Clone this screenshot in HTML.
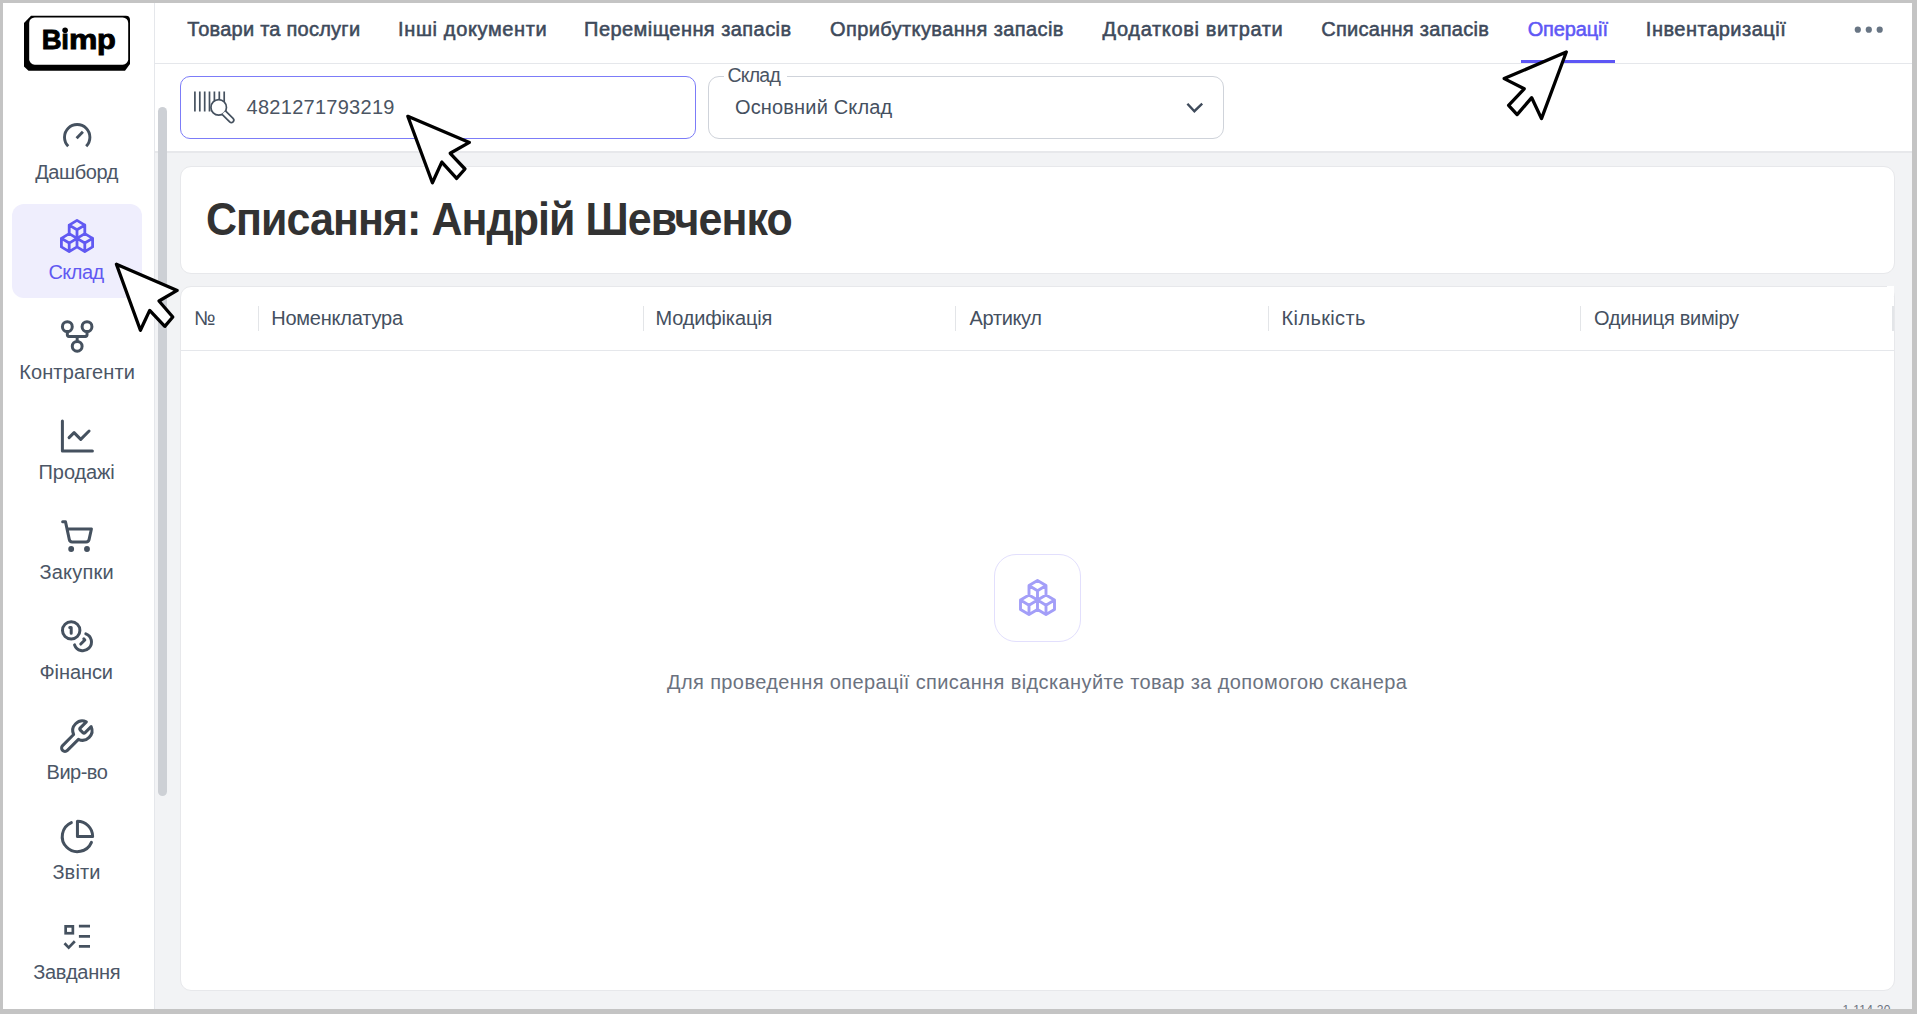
<!DOCTYPE html>
<html><head><meta charset="utf-8">
<style>
html,body{margin:0;padding:0;}
body{width:1917px;height:1014px;background:#c4c4c4;position:relative;overflow:hidden;font-family:"Liberation Sans",sans-serif;}
.abs{position:absolute;}
.t{position:absolute;line-height:1;white-space:nowrap;font-family:"Liberation Sans",sans-serif;}
#app{position:absolute;left:3px;top:3px;width:1909px;height:1006px;background:#f2f3f5;overflow:hidden;}
#side{position:absolute;left:3px;top:3px;width:151px;height:1006px;background:#fff;border-right:1px solid #e5e7eb;}
#hdr{position:absolute;left:155px;top:3px;width:1757px;height:60px;background:#fff;border-bottom:1px solid #e5e7eb;}
#srow{position:absolute;left:155px;top:64px;width:1757px;height:87px;background:#fff;border-bottom:2px solid #e7e8eb;}
.card{position:absolute;background:#fff;border:1px solid #e7e8eb;border-radius:11px;box-sizing:border-box;}
.tab{font-size:20px;color:#3e4a5b;-webkit-text-stroke:0.55px #3e4a5b;}
.th{font-size:20px;color:#45505f;}
.nl{font-size:20px;color:#4b5666;}
</style></head>
<body>
<div id="app"></div>
<div id="side"></div>
<div id="hdr"></div>
<div id="srow"></div>

<!-- logo -->
<svg class="abs" style="left:0;top:0" width="160" height="90" viewBox="0 0 160 90">
  <path d="M31 15.7 H126 Q130 15.7 130 20 V64 L125 70.8 H28.5 L24 66.5 V23 Z" fill="#000"/>
  <rect x="29.2" y="17.4" width="99" height="47.3" rx="5.5" fill="#fff"/>
</svg>
<div class="t" id="lgB" style="left:41.8px;top:26px;font-size:27.5px;font-weight:700;color:#000;-webkit-text-stroke:0.9px #000;">B</div>
<div class="t" id="lgI" style="left:61.3px;top:26px;font-size:27.5px;font-weight:700;color:#000;-webkit-text-stroke:0.9px #000;">ı</div>
<div class="t" id="lgM" style="left:68.8px;top:26px;font-size:27.5px;font-weight:700;color:#000;-webkit-text-stroke:0.9px #000;transform:scaleX(1.16);transform-origin:0 0;">m</div>
<div class="t" id="lgP" style="left:96.8px;top:26px;font-size:27.5px;font-weight:700;color:#000;-webkit-text-stroke:0.9px #000;transform:scaleX(1.12);transform-origin:0 0;">p</div>
<svg class="abs" style="left:0;top:0" width="100" height="60"><circle cx="65.1" cy="30.2" r="2.8" fill="#000"/></svg>

<!-- sidebar active -->
<div class="abs" style="left:12px;top:204px;width:130px;height:94px;background:#efeefd;border-radius:12px;"></div>

<!-- tabs -->
<div class="t tab" id="tab1" style="left:187.3px;top:19px;letter-spacing:0.244px;">Товари та послуги</div>
<div class="t tab" id="tab2" style="left:398.0px;top:19px;letter-spacing:0.639px;">Інші документи</div>
<div class="t tab" id="tab3" style="left:584.1px;top:19px;letter-spacing:0.440px;">Переміщення запасів</div>
<div class="t tab" id="tab4" style="left:830.0px;top:19px;letter-spacing:0.391px;">Оприбуткування запасів</div>
<div class="t tab" id="tab5" style="left:1102.6px;top:19px;letter-spacing:0.649px;">Додаткові витрати</div>
<div class="t tab" id="tab6" style="left:1321.2px;top:19px;letter-spacing:0.287px;">Списання запасів</div>
<div class="t tab" id="tab7" style="left:1527.7px;top:19px;color:#5f58f5;-webkit-text-stroke-color:#5f58f5;letter-spacing:-0.129px;">Операції</div>
<div class="t tab" id="tab8" style="left:1645.8px;top:19px;letter-spacing:0.523px;">Інвентаризації</div>
<div class="abs" style="left:1521px;top:60px;width:94px;height:3px;background:#5d56f5;"></div>
<svg class="abs" style="left:1840px;top:15px" width="60" height="30">
  <circle cx="17.8" cy="14.7" r="3.1" fill="#687584"/><circle cx="28.8" cy="14.7" r="3.1" fill="#687584"/><circle cx="39.7" cy="14.7" r="3.1" fill="#687584"/>
</svg>

<!-- search input -->
<div class="abs" style="left:180px;top:76px;width:516px;height:63px;box-sizing:border-box;border:1px solid #7c7cf8;border-radius:10px;background:#fff;"></div>
<div class="t" id="srch" style="left:246.6px;top:97px;font-size:20px;color:#4b5563;letter-spacing:0.267px;">4821271793219</div>

<!-- dropdown -->
<div class="abs" style="left:708px;top:76px;width:516px;height:63px;box-sizing:border-box;border:1px solid #cfd3da;border-radius:11px;background:#fff;"></div>
<div class="abs" style="left:724px;top:70px;width:63px;height:10px;background:#fff;"></div>
<div class="t" id="ddl" style="left:727.4px;top:66px;font-size:19.5px;color:#4b5563;letter-spacing:-0.750px;">Склад</div>
<div class="t" id="ddv" style="left:735.0px;top:97px;font-size:20px;color:#45505f;letter-spacing:0.154px;">Основний Склад</div>
<svg class="abs" style="left:1180px;top:95px" width="30" height="25">
  <path d="M7.4 8.7 L14.4 16.2 L22.2 8.7" fill="none" stroke="#3f4b5b" stroke-width="2.4"/>
</svg>

<!-- scrollbar -->
<div class="abs" style="left:158px;top:106.5px;width:9px;height:689.5px;background:#cdd0d5;border-radius:4.5px;"></div>

<!-- title card -->
<div class="card" style="left:180px;top:166px;width:1715px;height:108px;"></div>
<div class="t" id="title" style="left:205.6px;top:196px;font-size:46px;font-weight:700;color:#323232;letter-spacing:-1px;transform:scaleX(0.9334);transform-origin:0 0;">Списання: Андрій Шевченко</div>

<!-- table card -->
<div class="card" style="left:180px;top:286px;width:1715px;height:705px;"></div>
<div class="abs" style="left:1880px;top:286px;width:14px;height:10px;background:#fff;"></div>
<div class="abs" style="left:1880px;top:286px;width:7px;height:1px;background:#e7e8eb;"></div>
<div class="abs" style="left:181px;top:350px;width:1713px;height:1px;background:#e5e7eb;"></div>
<div class="abs" style="left:258px;top:306px;width:1px;height:25px;background:#e3e5e8;"></div>
<div class="abs" style="left:643px;top:306px;width:1px;height:25px;background:#e3e5e8;"></div>
<div class="abs" style="left:955px;top:306px;width:1px;height:25px;background:#e3e5e8;"></div>
<div class="abs" style="left:1268px;top:306px;width:1px;height:25px;background:#e3e5e8;"></div>
<div class="abs" style="left:1580px;top:306px;width:1px;height:25px;background:#e3e5e8;"></div>
<div class="abs" style="left:1892px;top:306px;width:2px;height:25px;background:#e3e5e8;"></div>
<div class="t th" id="th0" style="left:194px;top:308px;">№</div>
<div class="t th" id="th1" style="left:271.2px;top:308px;letter-spacing:-0.218px;">Номенклатура</div>
<div class="t th" id="th2" style="left:655.4px;top:308px;letter-spacing:-0.140px;">Модифікація</div>
<div class="t th" id="th3" style="left:969.6px;top:308px;letter-spacing:-0.367px;">Артикул</div>
<div class="t th" id="th4" style="left:1281.6px;top:308px;letter-spacing:0.350px;">Кількість</div>
<div class="t th" id="th5" style="left:1594.0px;top:308px;letter-spacing:-0.292px;">Одиниця виміру</div>

<!-- empty state -->
<div class="abs" style="left:994px;top:554px;width:87px;height:88px;box-sizing:border-box;border:1px solid #e2dffd;border-radius:22px;background:#fff;"></div>
<div class="t" id="empty" style="left:667.0px;top:672px;font-size:20px;color:#6b7280;letter-spacing:0.386px;">Для проведення операції списання відскануйте товар за допомогою сканера</div>

<!-- version -->
<div class="abs" style="left:1800px;top:990px;width:112px;height:19px;overflow:hidden;"><div class="t" id="ver" style="left:42.6px;top:14px;font-size:12px;color:#6b7280;letter-spacing:0.285px;">1.114.20</div></div>

<!-- sidebar labels -->
<div class="t nl" id="nl0" style="left:35.2px;top:162px;letter-spacing:-0.400px;">Дашборд</div>
<div class="t nl" id="nl1" style="left:48.4px;top:262px;color:#6159f2;letter-spacing:-0.500px;">Склад</div>
<div class="t nl" id="nl2" style="left:19.2px;top:362px;letter-spacing:0.120px;">Контрагенти</div>
<div class="t nl" id="nl3" style="left:38.6px;top:462px;letter-spacing:-0.100px;">Продажі</div>
<div class="t nl" id="nl4" style="left:39.4px;top:562px;letter-spacing:0.234px;">Закупки</div>
<div class="t nl" id="nl5" style="left:39.4px;top:662px;letter-spacing:-0.067px;">Фінанси</div>
<div class="t nl" id="nl6" style="left:46.6px;top:762px;letter-spacing:-0.520px;">Вир-во</div>
<div class="t nl" id="nl7" style="left:52.4px;top:862px;letter-spacing:0.150px;">Звіти</div>
<div class="t nl" id="nl8" style="left:33.2px;top:962px;letter-spacing:-0.285px;">Завдання</div>

<svg class="abs" style="left:0;top:0" width="1917" height="1014">
 <g fill="none" stroke="#45515f" stroke-linecap="round" stroke-linejoin="round">
  <!-- barcode search -->
  <g stroke-width="1.7" stroke-linecap="butt">
   <path d="M194.9 91.4V111.6M199.8 91.4V111.6M204.7 91.4V111.6M209.5 91.4V111.6M214.4 91.4V101M219.3 91.4V101M224.2 91.4V102.5"/>
   <circle cx="218.7" cy="107.4" r="7.75" fill="#fff"/>
   <path d="M0 -2.4H10.7A2.4 2.4 0 0 1 10.7 2.4H0" transform="translate(223.8 112.6) rotate(45)" fill="#fff"/>
  </g>
  <!-- dashboard gauge -->
  <g stroke-width="2.9" stroke-linecap="butt">
   <path d="M68.2 146.2A12.7 12.7 0 1 1 86.2 146.2"/>
   <path d="M76.6 138.2L82.9 131.7"/>
  </g>
  <!-- git fork -->
  <g transform="translate(57.5 316.8) scale(1.64)">
   <circle cx="12" cy="18" r="3" stroke-width="1.8293"/>
   <circle cx="6" cy="6" r="3" stroke-width="1.8293"/>
   <circle cx="18" cy="6" r="3" stroke-width="1.8293"/>
   <path d="M18 9v2c0 .6-.4 1-1 1H7c-.6 0-1-.4-1-1V9M12 12v3" stroke-width="1.8293"/>
  </g>
  <!-- line chart -->
  <g transform="translate(57.4 416) scale(1.667)">
   <path d="M3 3v18h18M19 9l-5 5-4-4-3 3" stroke-width="1.7996"/>
  </g>
  <!-- cart -->
  <g transform="translate(59.7 518.9) scale(1.436)">
   <circle cx="8" cy="21" r="1" stroke-width="2.0891"/>
   <circle cx="19" cy="21" r="1" stroke-width="2.0891"/>
   <path d="M2.05 2.05h2l2.66 12.42a2 2 0 0 0 2 1.58h9.78a2 2 0 0 0 1.95-1.57l1.65-7.43H5.12" stroke-width="2.0891"/>
  </g>
  <!-- coins -->
  <g transform="translate(59.6 618.8) scale(1.45)">
   <circle cx="8" cy="8" r="6" stroke-width="2.0690"/>
   <path d="M18.09 10.37A6 6 0 1 1 10.34 18M7 6h1v4M16.71 13.88l.7.71-2.82 2.82" stroke-width="2.0690"/>
  </g>
  <!-- wrench -->
  <g transform="translate(56.8 717.8) scale(1.6)">
   <path d="M14.7 6.3a1 1 0 0 0 0 1.4l1.6 1.6a1 1 0 0 0 1.4 0l3.77-3.77a6 6 0 0 1-7.94 7.94l-6.91 6.91a2.12 2.12 0 0 1-3-3l6.91-6.91a6 6 0 0 1 7.94-7.94l-3.76 3.76z" stroke-width="1.8750"/>
  </g>
  <!-- pie -->
  <g transform="translate(59.2 818.2) scale(1.52)">
   <path d="M21.21 15.89A10 10 0 1 1 8 2.83M22 12A10 10 0 0 0 12 2v10z" stroke-width="1.9737"/>
  </g>
  <!-- tasks -->
  <g stroke-width="2.7" stroke-linecap="butt" stroke-linejoin="miter">
   <rect x="65.65" y="926.35" width="7.2" height="6.9"/>
   <path d="M78.9 926.2H90M78.9 936.3H90M78.9 946.3H90"/>
   <path d="M64.5 943.3L68.7 947.6L74.8 941.3"/>
  </g>
 </g>
 <!-- packages active -->
 <g transform="translate(58.28 217.28) scale(1.56)" fill="none" stroke="#6159f2" stroke-linecap="round" stroke-linejoin="round">
  <path d="M7 16.5l-5 -3l5 -3l5 3v5.5l-5 3zM2 13.5v5.5l5 3M7 16.545l5 -3.03M17 16.5l-5 -3l5 -3l5 3v5.5l-5 3zM12 19l5 3M17 16.5l5 -3M12 13.5v-5.5l-5 -3l5 -3l5 3v5.5M7 5.03v5.455M12 8l5 -3" stroke-width="1.7949"/>
 </g>
 <!-- packages empty state -->
 <g transform="translate(1017.1 577.1) scale(1.7)" fill="none" stroke="#a39ef8" stroke-linecap="round" stroke-linejoin="round">
  <path d="M7 16.5l-5 -3l5 -3l5 3v5.5l-5 3zM2 13.5v5.5l5 3M7 16.545l5 -3.03M17 16.5l-5 -3l5 -3l5 3v5.5l-5 3zM12 19l5 3M17 16.5l5 -3M12 13.5v-5.5l-5 -3l5 -3l5 3v5.5M7 5.03v5.455M12 8l5 -3" stroke-width="1.7059"/>
 </g>
</svg>

<!-- CURSORS -->
<svg class="abs" style="left:0;top:0;overflow:visible" width="1917" height="1014">
  <g fill="#fff" stroke="#000" stroke-width="3.3" stroke-linejoin="round">
    <polygon points="407.8,116.3 469.4,142.4 450.2,153.3 465,169 456.6,178.4 441.8,162.1 432.4,182.8"/>
    <polygon points="116.4,264.2 177.2,290.4 159,301 172.8,317 164.8,326.3 149.7,310.4 140.4,330.3"/>
    <polygon points="1566.3,52 1504.2,78.6 1524.2,88.8 1508.6,105.3 1517.1,114.6 1531.7,97.7 1541.5,118.6"/>
  </g>
</svg>
</body></html>
